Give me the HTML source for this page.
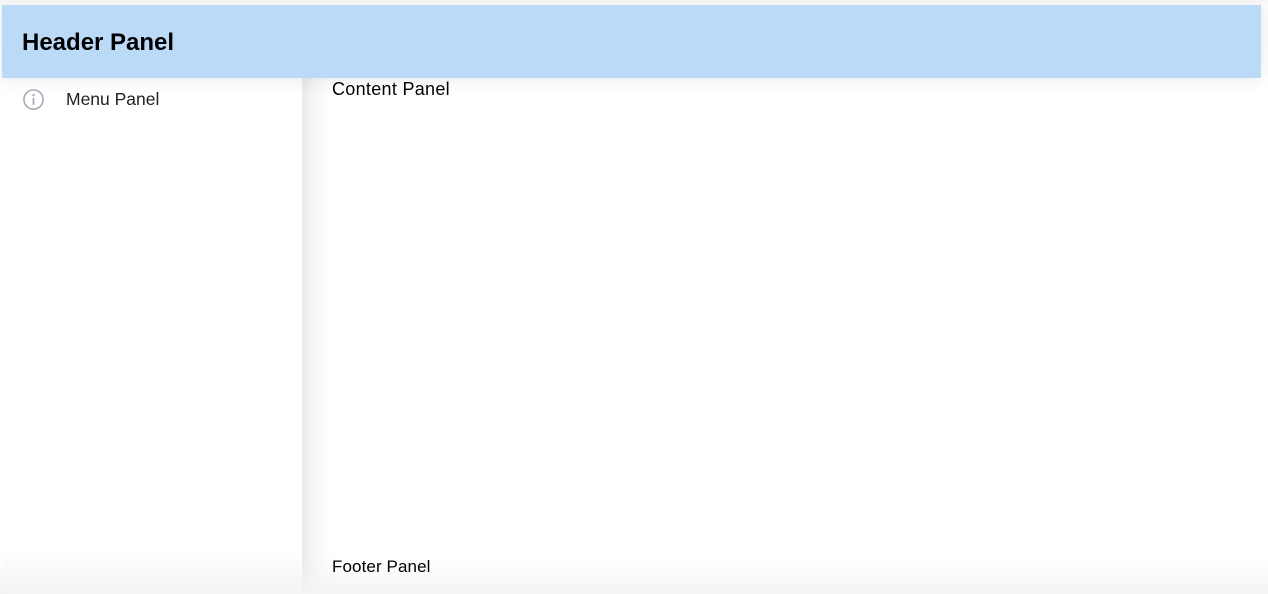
<!DOCTYPE html>
<html><head><meta charset="utf-8"><style>
html,body{margin:0;padding:0;width:1268px;height:594px;overflow:hidden;background:#f4f4f4;font-family:"Liberation Sans",Helvetica,Arial,sans-serif;}
.wrap{position:absolute;left:0;top:0;width:1268px;height:594px;background:linear-gradient(#f5f5f5 0,#fafafa 5px,#fff 120px,#fff 560px,#f3f3f3 594px);}
.menu{position:absolute;left:2px;top:78px;width:300px;height:516px;background:linear-gradient(#fff 0,#fff 470px,#f4f4f4 516px);}
.content{position:absolute;left:302px;top:78px;width:966px;height:516px;background:linear-gradient(90deg,#e9e9e9 0,#f6f6f6 12px,#fff 30px);}
.content .inner{position:absolute;inset:0;background:linear-gradient(#fff0 0,#fff0 480px,#f4f4f4 516px);}
.header{position:absolute;left:2px;top:5px;width:1259px;height:73px;background:#bbdaf7;box-shadow:0 4px 14px rgba(0,0,0,0.07);}
.header h1{margin:0;position:absolute;left:20px;top:25px;font-size:24px;font-weight:bold;color:#000;line-height:26px;}
.mi{position:absolute;left:22px;top:88px;display:flex;align-items:center;}
.mi span{margin-left:21px;font-size:17.5px;color:#222;}
.ct{position:absolute;left:332px;top:79px;font-size:18px;letter-spacing:0.3px;color:#000;}
.ft{position:absolute;left:332px;top:557px;font-size:17px;letter-spacing:0.1px;color:#000;}
</style></head><body>
<div class="wrap"></div>
<div class="menu"></div>
<div class="content"><div class="inner"></div></div>
<div class="header"><h1>Header Panel</h1></div>
<div class="mi"><svg width="23" height="23" viewBox="0 0 24 24"><circle cx="12" cy="12" r="10" fill="none" stroke="#a3a8b4" stroke-width="1.6"/><circle cx="12" cy="7.5" r="1.2" fill="#a3a8b4"/><rect x="11.1" y="10.5" width="1.8" height="7" fill="#a3a8b4"/></svg><span>Menu Panel</span></div>
<div class="ct">Content Panel</div>
<div class="ft">Footer Panel</div>
</body></html>
